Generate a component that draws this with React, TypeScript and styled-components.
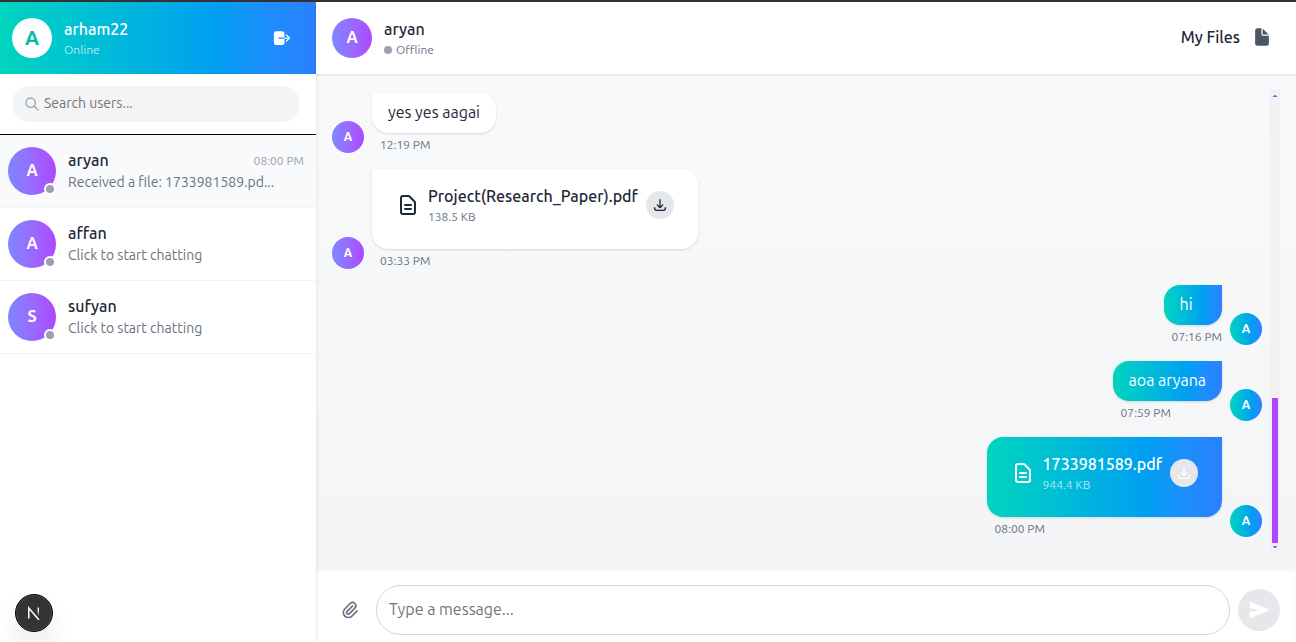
import React from "react";
import styled, { createGlobalStyle, css } from "styled-components";
import { IoDocument, IoLogOut, IoSend } from "react-icons/io5";
import {
  HiOutlineDocumentText,
  HiOutlineDownload,
  HiOutlinePaperClip,
  HiOutlineSearch,
} from "react-icons/hi";

const ocean =
  "linear-gradient(to right, #00d5be, #00c2d2 25%, #00aee4 50%, #009ff1 68%, #0f97f7 76%, #1c8ffc 84%, #2b7fff)";
const violet = "linear-gradient(to right in oklab, #7c86ff, #ad46ff)";
const softShadow = "0 1px 3px rgba(0,0,0,.1), 0 1px 2px -1px rgba(0,0,0,.1)";

const GlobalStyle = createGlobalStyle`
  *, *::before, *::after { box-sizing: border-box; }
  body { margin: 0; overflow: hidden; background: #343434; }
  body, button, input { font-family: Ubuntu, "Open Sans", sans-serif; }
  button { border: 0; padding: 0; background: none; color: inherit; }
  svg { display: block; flex: none; }
`;

const Page = styled.div`
  display: flex;
  height: 642px;
  padding-top: 2px;
  color: #1e2939;
  font-size: 16px;
  line-height: 24px;
`;

const Sidebar = styled.aside`
  width: 316px;
  flex: none;
  display: flex;
  flex-direction: column;
  background: #fff;
  position: relative;
  z-index: 1;
  box-shadow: 0 0 4px rgba(0, 0, 0, 0.12);
`;

const Avatar = styled.div<{ $size: number; $bg: string; $font: number; $color?: string }>`
  width: ${(p) => p.$size}px;
  height: ${(p) => p.$size}px;
  flex: none;
  display: flex;
  align-items: center;
  justify-content: center;
  padding-bottom: ${(p) => (p.$font === 16 ? 2 : 0)}px;
  border-radius: 50%;
  background: ${(p) => p.$bg};
  color: ${(p) => p.$color ?? "#fff"};
  font-size: ${(p) => p.$font}px;
  font-weight: 700;
  position: relative;
`;

const ProfileBar = styled.header`
  display: flex;
  align-items: center;
  gap: 12px;
  height: 72px;
  padding: 0 24px 0 12px;
  background: ${ocean};
  color: #fff;
`;

const Stack = styled.div`
  flex: 1;
  min-width: 0;
`;

const Name = styled.div`
  padding-bottom: 2px;
  font-weight: 475;
  line-height: 22px;
`;

const Caption = styled.div<{ $color: string }>`
  display: flex;
  align-items: center;
  gap: 4px;
  font-size: 12px;
  line-height: 16px;
  color: ${(p) => p.$color};
`;

const SearchArea = styled.div`
  height: 61px;
  padding: 12px 16px 12px 12px;
  border-bottom: 1px solid #000;
`;

const SearchField = styled.label`
  display: flex;
  align-items: center;
  gap: 4px;
  height: 36px;
  padding: 0 12px;
  border-radius: 18px;
  background: #f3f4f6;
  color: #99a1af;
`;

const TextInput = styled.input<{ $size: number }>`
  flex: 1;
  min-width: 0;
  border: 0;
  padding: 0 0 2px;
  outline: 0;
  background: transparent;
  font-size: ${(p) => p.$size}px;
  font-weight: 375;
  &::placeholder { color: #757575; }
`;

const Contact = styled.div<{ $active?: boolean }>`
  display: flex;
  align-items: center;
  gap: 12px;
  height: 73px;
  padding: 0 12px 0 8px;
  border-bottom: 1px solid #f3f4f6;
  background: ${(p) => (p.$active ? "#f9fafb" : "#fff")};
`;

const ContactTop = styled.div`
  display: flex;
  align-items: center;
  justify-content: space-between;
`;

const Preview = styled.div`
  padding-bottom: 2px;
  font-size: 14px;
  font-weight: 375;
  line-height: 18px;
  color: #6a7282;
`;

const Presence = styled.span`
  position: absolute;
  right: 0;
  bottom: 0;
  width: 12px;
  height: 12px;
  border: 2px solid #fff;
  border-radius: 50%;
  background: #99a1af;
`;

const Dot = styled.span`
  width: 8px;
  height: 8px;
  border-radius: 50%;
  background: #99a1af;
`;

const Chat = styled.main`
  flex: 1;
  min-width: 0;
  display: flex;
  flex-direction: column;
  background: linear-gradient(to bottom, #f9fafb, #f3f4f6);
`;

const ChatHeader = styled.header`
  display: flex;
  align-items: center;
  gap: 12px;
  height: 72px;
  flex: none;
  padding: 0 24px 0 16px;
  background: #fff;
  box-shadow: ${softShadow};
  position: relative;
  z-index: 2;
`;

const FilesLink = styled.button`
  display: flex;
  align-items: center;
  gap: 12px;
  font-size: 16px;
  svg { color: #4a5565; margin-bottom: 3px; }
`;

const ScrollArea = styled.section`
  flex: 1;
  min-height: 0;
  display: flex;
  padding: 16px 16px 17px;
`;

const Messages = styled.div`
  flex: 1;
  display: flex;
  flex-direction: column;
  gap: 16px;
  padding: 3px 8px 0 0;
`;

const MessageRow = styled.div<{ $sent?: boolean }>`
  display: flex;
  flex-direction: ${(p) => (p.$sent ? "row-reverse" : "row")};
  align-items: flex-end;
  gap: 8px;
`;

const Bubble = styled.div<{ $sent?: boolean; $file?: boolean }>`
  display: flex;
  gap: 8px;
  padding: ${(p) => (p.$file ? "16px 24px 24px" : "7px 16px 9px")};
  border-radius: 16px;
  box-shadow: ${softShadow};
  font-weight: 375;
  ${(p) =>
    p.$sent
      ? css`background: ${ocean}; color: #fff; border-top-right-radius: 0;`
      : css`background: #fff; border-top-left-radius: 0;`}
`;

const FileIcon = styled.span`
  padding-top: 8px;
`;

const FileSize = styled(Caption)`
  font-weight: 400;
`;

const Download = styled.button`
  display: flex;
  align-items: center;
  justify-content: center;
  width: 28px;
  height: 28px;
  margin-top: 6px;
  border-radius: 50%;
  background: #e5e7eb;
`;

const Time = styled.div`
  margin-top: 4px;
  padding-left: 8px;
  font-size: 12px;
  line-height: 16px;
  color: #6a7282;
`;

const Scrollbar = styled.div`
  display: flex;
  flex-direction: column;
  align-items: center;
  justify-content: space-between;
  width: 10px;
  padding: 5px 0;
  background: #f1f1f1;
  color: #ad46ff;
`;

const Thumb = styled.div`
  width: 6px;
  height: 145px;
  margin: auto 0 3px;
  background: currentColor;
`;

const Composer = styled.footer`
  display: flex;
  align-items: center;
  gap: 8px;
  height: 72px;
  flex: none;
  padding: 8px 16px 0 24px;
  background: #fff;
  box-shadow: inset 0 1px 3px #f3f4f6;
`;

const Attach = styled.button`
  width: 28px;
  color: #6a7282;
`;

const MessageField = styled.label`
  flex: 1;
  display: flex;
  height: 50px;
  padding: 0 12px;
  border: 1px solid #d1d5dc;
  border-radius: 25px;
`;

const Send = styled.button`
  display: flex;
  align-items: center;
  justify-content: center;
  width: 42px;
  height: 42px;
  border-radius: 50%;
  background: #e5e7eb;
  color: #fff;
`;

const DevBadge = styled.div`
  position: absolute;
  left: 15px;
  top: 594px;
  z-index: 3;
  width: 38px;
  height: 38px;
  display: flex;
  align-items: center;
  justify-content: center;
  border-radius: 50%;
  background: #333;
  border: 1px solid #0a0a0a;
  box-shadow: inset 0 0 0 1px #4a4a4a, 0 16px 32px -8px rgba(0, 0, 0, 0.24);
`;

type Message = { text?: string; file?: string; size?: string; time: string; sent?: boolean };

const contacts = [
  { name: "aryan", preview: "Received a file: 1733981589.pd...", time: "08:00 PM" },
  { name: "affan", preview: "Click to start chatting" },
  { name: "sufyan", preview: "Click to start chatting" },
];

const messages: Message[] = [
  { text: "yes yes aagai", time: "12:19 PM" },
  { file: "Project(Research_Paper).pdf", size: "138.5 KB", time: "03:33 PM" },
  { text: "hi", time: "07:16 PM", sent: true },
  { text: "aoa aryana", time: "07:59 PM", sent: true },
  { file: "1733981589.pdf", size: "944.4 KB", time: "08:00 PM", sent: true },
];

const MessageItem = ({ text, file, size, time, sent }: Message) => (
  <MessageRow $sent={sent}>
    <Avatar $size={32} $bg={sent ? ocean : violet} $font={12}>A</Avatar>
    <div>
      <Bubble $sent={sent} $file={!!file}>
        {file ? (
          <>
            <FileIcon><HiOutlineDocumentText size={24} /></FileIcon>
            <div>
              <Name>{file}</Name>
              <FileSize $color={sent ? "rgba(255,255,255,.7)" : "#6a7282"}>{size}</FileSize>
            </div>
            <Download aria-label="Download"><HiOutlineDownload size={16} /></Download>
          </>
        ) : (
          text
        )}
      </Bubble>
      <Time>{time}</Time>
    </div>
  </MessageRow>
);

export default function App() {
  return (
    <>
      <GlobalStyle />
      <Page>
        <Sidebar>
          <ProfileBar>
            <Avatar $size={40} $bg="#fff" $font={20} $color="#00bba7">A</Avatar>
            <Stack>
              <Name>arham22</Name>
              <Caption $color="rgba(255,255,255,.7)">Online</Caption>
            </Stack>
            <IoLogOut size={20} />
          </ProfileBar>
          <SearchArea>
            <SearchField>
              <HiOutlineSearch size={16} />
              <TextInput $size={14} placeholder="Search users..." />
            </SearchField>
          </SearchArea>
          {contacts.map((c, i) => (
            <Contact key={c.name} $active={i === 0}>
              <Avatar $size={48} $bg={violet} $font={16}>
                {c.name[0].toUpperCase()}
                <Presence />
              </Avatar>
              <Stack>
                <ContactTop>
                  <Name>{c.name}</Name>
                  {c.time && <Caption $color="#99a1af">{c.time}</Caption>}
                </ContactTop>
                <Preview>{c.preview}</Preview>
              </Stack>
            </Contact>
          ))}
        </Sidebar>
        <Chat>
          <ChatHeader>
            <Avatar $size={40} $bg={violet} $font={16}>A</Avatar>
            <Stack>
              <Name>aryan</Name>
              <Caption $color="#6a7282"><Dot />Offline</Caption>
            </Stack>
            <FilesLink><Name>My Files</Name><IoDocument size={20} /></FilesLink>
          </ChatHeader>
          <ScrollArea>
            <Messages>
              {messages.map((m) => <MessageItem key={m.time} {...m} />)}
            </Messages>
            <Scrollbar>
              <svg width="4" height="2" viewBox="0 0 4 2" fill="currentColor"><path d="M1 0h2v1h1v1H0V1h1z" /></svg>
              <Thumb />
              <svg width="4" height="2" viewBox="0 0 4 2" fill="currentColor"><path d="M0 0h4v1H3v1H1V1H0z" /></svg>
            </Scrollbar>
          </ScrollArea>
          <Composer>
            <Attach aria-label="Attach"><HiOutlinePaperClip size={20} /></Attach>
            <MessageField><TextInput $size={16} placeholder="Type a message..." /></MessageField>
            <Send aria-label="Send"><IoSend size={20} /></Send>
          </Composer>
        </Chat>
      </Page>
      <DevBadge>
        <svg width="14" height="14" viewBox="0 0 14 14" fill="none">
          <defs>
            <linearGradient id="fade" x1="0" y1="0" x2="0" y2="1">
              <stop offset=".3" stopColor="#fff" />
              <stop offset="1" stopColor="#fff" stopOpacity="0" />
            </linearGradient>
          </defs>
          <path d="M1.8 12.5V2L12 14" stroke="#fff" strokeWidth="1.5" />
          <path d="M10.6 1.4h1.4v9h-1.4z" fill="url(#fade)" />
        </svg>
      </DevBadge>
    </>
  );
}
